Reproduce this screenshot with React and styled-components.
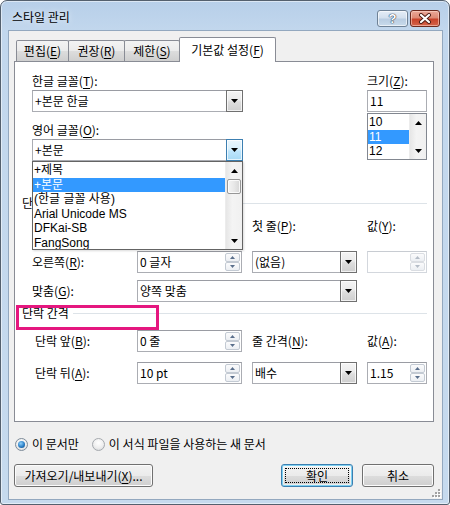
import React from 'react';
import styled, { createGlobalStyle, css } from 'styled-components';

const GlobalStyle = createGlobalStyle`
  html, body { margin: 0; padding: 0; background: #fff; }
  body {
    font-family: "Noto Sans CJK KR", "Noto Sans", sans-serif;
    font-size: 12px;
    color: #000;
  }
  * { box-sizing: border-box; }
  u { text-decoration-thickness: 1px; text-underline-offset: 2px; }
`;

const Window = styled.div`
  width: 450px;
  height: 505px;
  border: 1px solid #54606e;
  border-radius: 7px 7px 3px 3px;
  background: linear-gradient(180deg, #b7cfe9 0%, #c2d7ed 30px, #c6daee 100%);
  box-shadow: inset 0 0 0 1px rgba(255, 255, 255, 0.5);
  padding: 0 6px 4px 7px;
  display: flex;
  flex-direction: column;
`;

const TitleBar = styled.div`
  height: 29px;
  display: flex;
  align-items: flex-start;
  padding-left: 4px;
`;

const Title = styled.span`
  margin-top: 8px;
  line-height: 16px;
  color: #000;
  text-shadow: 0 0 6px rgba(255, 255, 255, 0.9);
`;

const CaptionGroup = styled.div`
  margin-left: auto;
  margin-top: 9px;
  margin-right: 3px;
  display: flex;
  gap: 2px;
`;

const CaptionButton = styled.div`
  width: ${(p) => p.$w}px;
  height: 17px;
  border-radius: 3px;
  display: flex;
  align-items: center;
  justify-content: center;
  ${(p) =>
    p.$close
      ? css`
          border: 1px solid #6b2a1f;
          background: linear-gradient(180deg, #eaa899 0%, #de8a75 45%, #c8432b 55%, #d4644a 100%);
          box-shadow: inset 0 0 0 1px rgba(255, 220, 210, 0.55);
        `
      : css`
          border: 1px solid #6f8296;
          background: linear-gradient(180deg, #e4edf7 0%, #d3e0ee 45%, #b9cde2 55%, #c9dbec 100%);
          box-shadow: inset 0 0 0 1px rgba(255, 255, 255, 0.6);
        `}
`;

const HelpGlyph = styled.span`
  font-family: "Liberation Sans", sans-serif;
  font-weight: bold;
  font-size: 13px;
  line-height: 13px;
  color: #fff;
  text-shadow: 0 0 1px #2b3c52, 0 0 1px #2b3c52, 0 0 1px #2b3c52;
`;

const Client = styled.div`
  flex: 1;
  position: relative;
  background: #f0f0f0;
  border: 1px solid #93a8bf;
  padding: 6px 8px 0 5px;
  display: flex;
  flex-direction: column;
`;

const TabStrip = styled.div`
  height: 25px;
  margin-bottom: -1px;
  padding-left: 2px;
  display: flex;
  align-items: flex-end;
  position: relative;
  z-index: 2;
`;

const Tab = styled.div`
  width: ${(p) => p.$w}px;
  margin-right: -1px;
  border: 1px solid #898c95;
  border-bottom: none;
  border-radius: 2px 2px 0 0;
  display: flex;
  justify-content: center;
  line-height: 18px;
  ${(p) =>
    p.$active
      ? css`
          height: 25px;
          padding-top: 3px;
          background: #fff;
          position: relative;
          z-index: 1;
        `
      : css`
          height: 21px;
          margin-bottom: 1px;
          padding-top: 1px;
          background: linear-gradient(180deg, #f3f3f3 0%, #ebebeb 50%, #dddddd 51%, #cfcfcf 100%);
        `}
`;

const Panel = styled.div`
  height: 361px;
  border: 1px solid #898c95;
  background: #fff;
  position: relative;
`;

const TopSection = styled.div`
  display: flex;
  padding: 11px 6px 0 17px;
`;

const Column = styled.div`
  width: ${(p) => p.$w}px;
  display: flex;
  flex-direction: column;
  ${(p) => p.$right && 'margin-left: auto;'}
`;

const Label = styled.div`
  height: 16px;
  line-height: 16px;
  white-space: nowrap;
  margin-top: ${(p) => p.$mt || 0}px;
  padding-left: ${(p) => p.$indent || 0}px;
`;

const Field = styled.div`
  height: 22px;
  margin-top: ${(p) => p.$mt || 0}px;
  border: 1px solid ${(p) => (p.$disabled ? '#d3d7dd' : '#abadb3')};
  border-top-color: ${(p) => (p.$disabled ? '#c8ccd2' : '#9a9ca3')};
  background: #fff;
  display: flex;
  align-items: center;
  white-space: nowrap;
  ${(p) => p.$span && `grid-column: ${p.$span};`}
`;

const FieldText = styled.span`
  flex: 1;
  padding-left: 2px;
  line-height: 16px;
  overflow: hidden;
`;

const ComboButton = styled.div`
  width: 17px;
  align-self: stretch;
  margin: -1px -1px -1px 0;
  display: flex;
  align-items: center;
  justify-content: center;
  box-shadow: inset 0 0 0 1px rgba(255, 255, 255, 0.7);
  ${(p) =>
    p.$hot
      ? css`
          border: 1px solid #3c7fb1;
          background: linear-gradient(180deg, #eaf6fd 0%, #d9f0fc 45%, #bee6fd 55%, #a7d9f5 100%);
        `
      : css`
          border: 1px solid #707070;
          background: linear-gradient(180deg, #f4f4f4 0%, #ebebeb 45%, #dddddd 55%, #cfcfcf 100%);
        `}
`;

const SpinColumn = styled.div`
  width: 16px;
  align-self: stretch;
  padding: 1px 1px 1px 0;
  display: flex;
  flex-direction: column;
`;

const SpinButton = styled.div`
  flex: 1;
  border: 1px solid ${(p) => (p.$disabled ? '#dadde2' : '#c3cad3')};
  border-radius: 2px;
  background: linear-gradient(180deg, #fbfbfc 0%, #eceff3 100%);
  display: flex;
  align-items: center;
  justify-content: center;
`;

const ListBox = styled.div`
  margin-top: ${(p) => p.$mt || 0}px;
  height: ${(p) => p.$h}px;
  border: 1px solid ${(p) => p.$border || '#828790'};
  background: #fff;
  display: flex;
`;

const DropList = styled(ListBox)`
  position: absolute;
  top: 99px;
  left: 17px;
  width: 211px;
  z-index: 3;
  box-shadow: 1px 1px 2px rgba(0, 0, 0, 0.15);
`;

const Items = styled.div`
  flex: 1;
  padding-top: ${(p) => p.$pt || 0}px;
  overflow: hidden;
`;

const Item = styled.div`
  height: 14.5px;
  line-height: 14.5px;
  padding-left: 1px;
  white-space: nowrap;
  font-family: "Liberation Sans", "Noto Sans CJK KR", sans-serif;
  ${(p) =>
    p.$selected &&
    css`
      background: #3399ff;
      color: #fff;
    `}
`;

const ScrollBar = styled.div`
  width: 17px;
  background: linear-gradient(90deg, #e6e6e6 0%, #f4f4f4 40%, #f0f0f0 100%);
  border-left: 1px solid #ececec;
  display: flex;
  flex-direction: column;
`;

const ScrollArrow = styled.div`
  height: 17px;
  display: flex;
  align-items: center;
  justify-content: center;
`;

const ScrollTrack = styled.div`
  flex: 1;
`;

const Thumb = styled.div`
  height: 15px;
  margin: 0 1px;
  border: 1px solid #979797;
  border-radius: 2px;
  background: linear-gradient(90deg, #f4f4f4 0%, #e8e8e8 50%, #d6d6d6 100%);
  box-shadow: inset 0 0 0 1px rgba(255, 255, 255, 0.8);
`;

const GroupHeader = styled.div`
  height: 16px;
  margin-top: ${(p) => p.$mt}px;
  padding: 0 6px 0 7px;
  display: flex;
  align-items: center;
  position: relative;
  line-height: 16px;
  white-space: nowrap;

  &::after {
    content: '';
    flex: 1;
    height: 1px;
    margin-left: 4px;
    margin-top: 1px;
    background: #dde3e8;
  }
`;

const Highlight = styled.div`
  position: absolute;
  left: 1px;
  top: 0;
  width: 143px;
  height: 25px;
  border: 3px solid #e5177f;
`;

const Row = styled.div`
  display: grid;
  grid-template-columns: 95px 105px 105px 60px;
  column-gap: 10px;
  align-items: center;
  height: 22px;
  padding-left: 17px;
  margin-top: ${(p) => p.$mt}px;
`;

const RadioRow = styled.div`
  margin-top: 14px;
  height: 16px;
  padding-left: 1px;
  display: flex;
  align-items: center;
`;

const RadioOption = styled.label`
  display: flex;
  align-items: center;
  gap: 4px;
  margin-right: 13px;
  line-height: 16px;
`;

const RadioDot = styled.span`
  width: 13px;
  height: 13px;
  border-radius: 50%;
  border: 1px solid ${(p) => (p.$checked ? '#7d8b99' : '#a5a9ae')};
  background: radial-gradient(circle at 50% 35%, #ffffff 0%, #eeeeee 55%, #cfd3d6 100%);
  display: inline-flex;
  align-items: center;
  justify-content: center;

  &::after {
    content: '';
    display: ${(p) => (p.$checked ? 'block' : 'none')};
    width: 7px;
    height: 7px;
    border-radius: 50%;
    background: radial-gradient(circle at 40% 35%, #8fd0fb 0%, #2a7fc6 55%, #0e3f75 100%);
  }
`;

const ButtonRow = styled.div`
  margin-top: 12px;
  display: flex;
  gap: 9px;
`;

const Button = styled.div`
  width: ${(p) => p.$w}px;
  height: 23px;
  border-radius: 3px;
  display: flex;
  align-items: center;
  justify-content: center;
  position: relative;
  line-height: 16px;
  background: linear-gradient(180deg, #f2f2f2 0%, #ebebeb 50%, #dddddd 51%, #cfcfcf 100%);
  ${(p) =>
    p.$default
      ? css`
          border: 1px solid #3c7fb1;
          box-shadow: inset 0 0 0 1px #7ed1f2, inset 0 0 0 2px rgba(255, 255, 255, 0.6);
          &::after {
            content: '';
            position: absolute;
            inset: 3px;
            border: 1px dotted #000;
          }
        `
      : css`
          border: 1px solid #707070;
          box-shadow: inset 0 0 0 1px #fcfcfc;
        `}
  ${(p) => p.$push && 'margin-left: auto;'}
`;

const Grip = styled.svg`
  position: absolute;
  right: 1px;
  bottom: 1px;
`;

const Arrow = ({ dir = 'down', color = '#000', w = 7, h = 4 }) => (
  <svg width={w} height={h} viewBox={`0 0 ${w} ${h}`}>
    {dir === 'down' ? (
      <polygon points={`0,0 ${w},0 ${w / 2},${h}`} fill={color} />
    ) : (
      <polygon points={`0,${h} ${w},${h} ${w / 2},0`} fill={color} />
    )}
  </svg>
);

const Combo = ({ children, hot, span }) => (
  <Field $span={span}>
    <FieldText>{children}</FieldText>
    <ComboButton $hot={hot}>
      <Arrow />
    </ComboButton>
  </Field>
);

const SpinBox = ({ children, disabled }) => (
  <Field $disabled={disabled}>
    <FieldText>{children}</FieldText>
    <SpinColumn>
      <SpinButton $disabled={disabled}>
        <Arrow dir="up" w={5} h={3} color={disabled ? '#b4bcc7' : '#5a6f8c'} />
      </SpinButton>
      <SpinButton $disabled={disabled}>
        <Arrow dir="down" w={5} h={3} color={disabled ? '#b4bcc7' : '#5a6f8c'} />
      </SpinButton>
    </SpinColumn>
  </Field>
);

const CloseGlyph = () => (
  <svg width="14" height="11" viewBox="0 0 14 11">
    <path d="M3 2 L11 9 M11 2 L3 9" stroke="#4a1a12" strokeWidth="4" strokeLinecap="round" />
    <path d="M3 2 L11 9 M11 2 L3 9" stroke="#fff" strokeWidth="2.2" strokeLinecap="round" />
  </svg>
);

const fontItems = ['+제목', '+본문', '(한글 글꼴 사용)', 'Arial Unicode MS', 'DFKai-SB', 'FangSong'];
const sizeItems = ['10', '11', '12'];

export default function App() {
  return (
    <>
      <GlobalStyle />
      <Window>
        <TitleBar>
          <Title>스타일 관리</Title>
          <CaptionGroup>
            <CaptionButton $w={31}>
              <HelpGlyph>?</HelpGlyph>
            </CaptionButton>
            <CaptionButton $w={30} $close>
              <CloseGlyph />
            </CaptionButton>
          </CaptionGroup>
        </TitleBar>

        <Client>
          <TabStrip>
            <Tab $w={53}>편집(<u>E</u>)</Tab>
            <Tab $w={57}>권장(<u>R</u>)</Tab>
            <Tab $w={56}>제한(<u>S</u>)</Tab>
            <Tab $w={97} $active>기본값 설정(<u>F</u>)</Tab>
          </TabStrip>

          <Panel>
            <TopSection>
              <Column $w={211}>
                <Label>한글 글꼴(<u>T</u>):</Label>
                <Field $mt={1}>
                  <FieldText>+본문 한글</FieldText>
                  <ComboButton>
                    <Arrow />
                  </ComboButton>
                </Field>
                <Label $mt={10}>영어 글꼴(<u>O</u>):</Label>
                <Field $mt={1}>
                  <FieldText>+본문</FieldText>
                  <ComboButton $hot>
                    <Arrow />
                  </ComboButton>
                </Field>
              </Column>
              <Column $w={60} $right>
                <Label>크기(<u>Z</u>):</Label>
                <Field $mt={1}>
                  <FieldText>11</FieldText>
                </Field>
                <ListBox $mt={1} $h={47}>
                  <Items $pt={1}>
                    {sizeItems.map((s) => (
                      <Item key={s} $selected={s === '11'}>
                        {s}
                      </Item>
                    ))}
                  </Items>
                  <ScrollBar>
                    <ScrollArrow>
                      <Arrow dir="up" />
                    </ScrollArrow>
                    <ScrollTrack />
                    <ScrollArrow>
                      <Arrow />
                    </ScrollArrow>
                  </ScrollBar>
                </ListBox>
              </Column>
            </TopSection>

            {/* the open font list covers the left part of this group */}
            <GroupHeader $mt={34}>단</GroupHeader>
            <Row $mt={4}>
              <Label />
              <Field />
              <Label>첫 줄(<u>P</u>):</Label>
              <Label>값(<u>Y</u>):</Label>
            </Row>
            <Row $mt={14}>
              <Label>오른쪽(<u>R</u>):</Label>
              <SpinBox>0 글자</SpinBox>
              <Combo>(없음)</Combo>
              <SpinBox disabled />
            </Row>
            <Row $mt={7}>
              <Label>맞춤(<u>G</u>):</Label>
              <Combo span="2 / 4">양쪽 맞춤</Combo>
            </Row>

            <GroupHeader $mt={3}>
              단락 간격
              <Highlight />
            </GroupHeader>
            <Row $mt={9}>
              <Label $indent={3}>단락 앞(<u>B</u>):</Label>
              <SpinBox>0 줄</SpinBox>
              <Label>줄 간격(<u>N</u>):</Label>
              <Label>값(<u>A</u>):</Label>
            </Row>
            <Row $mt={10}>
              <Label $indent={3}>단락 뒤(<u>A</u>):</Label>
              <SpinBox>10 pt</SpinBox>
              <Combo>배수</Combo>
              <SpinBox>1.15</SpinBox>
            </Row>

            <DropList $h={89} $border="#646464">
              <Items $pt={1}>
                {fontItems.map((f) => (
                  <Item key={f} $selected={f === '+본문'}>
                    {f}
                  </Item>
                ))}
              </Items>
              <ScrollBar>
                <ScrollArrow>
                  <Arrow dir="up" />
                </ScrollArrow>
                <Thumb />
                <ScrollTrack />
                <ScrollArrow>
                  <Arrow />
                </ScrollArrow>
              </ScrollBar>
            </DropList>
          </Panel>

          <RadioRow>
            <RadioOption>
              <RadioDot $checked />
              이 문서만
            </RadioOption>
            <RadioOption>
              <RadioDot />
              이 서식 파일을 사용하는 새 문서
            </RadioOption>
          </RadioRow>

          <ButtonRow>
            <Button $w={139}>가져오기/내보내기(<u>X</u>)...</Button>
            <Button $w={72} $default $push>
              확인
            </Button>
            <Button $w={72}>취소</Button>
          </ButtonRow>

          <Grip width="10" height="10" viewBox="0 0 10 10">
            {[
              [8, 2],
              [5, 5],
              [8, 5],
              [2, 8],
              [5, 8],
              [8, 8],
            ].map(([x, y]) => (
              <g key={`${x}-${y}`}>
                <rect x={x} y={y} width="2" height="2" fill="#fff" />
                <rect x={x - 1} y={y - 1} width="2" height="2" fill="#a2a2a2" />
              </g>
            ))}
          </Grip>
        </Client>
      </Window>
    </>
  );
}
